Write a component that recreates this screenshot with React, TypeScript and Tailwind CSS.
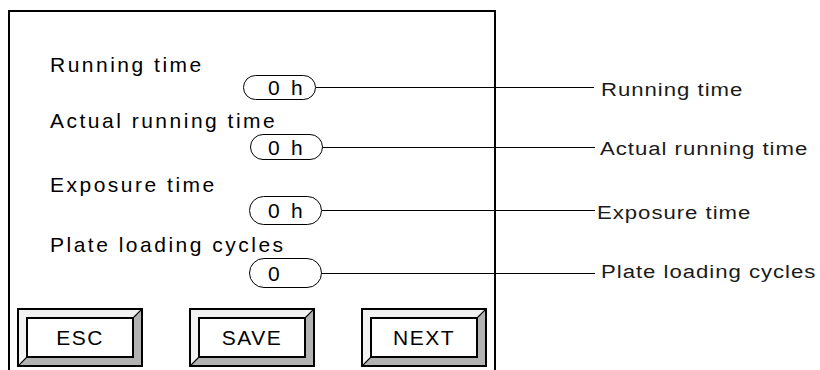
import React from "react";

const font = { fontFamily: '"Liberation Sans", Arial, sans-serif' };

function LeftLabel({ text, mt }: { text: string; mt: string }) {
  return (
    <div className={`${mt} pl-[40px] text-[21px] leading-[24px] tracking-[2.5px] text-black whitespace-nowrap`}>
      {text}
    </div>
  );
}

function Row({
  value,
  label,
  mt,
  pillMl,
  pillPl,
  pillH,
  lineW,
  labelMl,
  labelMt,
}: {
  value: string;
  label: string;
  mt: string;
  pillMl: string;
  pillPl: string;
  pillH: string;
  lineW: string;
  labelMl: string;
  labelMt: string;
}) {
  return (
    <div className={`${mt} flex items-center w-max`}>
      <div
        className={`${pillMl} ${pillPl} ${pillH} w-[73px] shrink-0 flex items-center rounded-full border border-black bg-white text-[21px] leading-none tracking-[2.8px] text-black`}
      >
        {value}
      </div>
      <div className={`${lineW} h-px bg-black shrink-0`} />
      <div
        className={`${labelMl} ${labelMt} origin-left scale-x-[1.23] text-[18px] leading-none tracking-[0.8px] text-[#1a1a1a] whitespace-nowrap`}
      >
        {label}
      </div>
    </div>
  );
}

function BevelButton({ text }: { text: string }) {
  return (
    <div className="relative w-[126px] h-[59px] border-2 border-black">
      <div className="w-full h-full border-[7px] border-t-[#f2f2f2] border-l-[#f2f2f2] border-r-[#b3b3b3] border-b-[#b3b3b3]">
        <div className="w-full h-full border-2 border-black bg-white flex items-center justify-center text-[21px] leading-none tracking-[1.5px] text-black">
          {text}
        </div>
      </div>
      <svg className="absolute inset-0 pointer-events-none" width="122" height="55" viewBox="0 0 122 55">
        <line x1="122" y1="0" x2="114" y2="8" stroke="#000" strokeWidth="1.2" />
        <line x1="0" y1="55" x2="8" y2="47" stroke="#000" strokeWidth="1.2" />
      </svg>
    </div>
  );
}

export default function App() {
  return (
    <div className="w-[820px] h-[370px] overflow-hidden bg-white" style={font}>
      <div className="ml-[8px] mt-[10px] w-[488px] h-[365px] border-2 border-black flex flex-col">
        <LeftLabel text="Running time" mt="mt-[41px]" />
        <Row
          value="0 h"
          label="Running time"
          mt="-mt-[2px]"
          pillMl="ml-[233px]"
          pillPl="pl-[24px]"
          pillH="h-[25px]"
          lineW="w-[278px]"
          labelMl="ml-[7px]"
          labelMt="mt-[4px]"
        />
        <LeftLabel text="Actual running time" mt="mt-[9px]" />
        <Row
          value="0 h"
          label="Actual running time"
          mt="mt-[1px]"
          pillMl="ml-[240px]"
          pillPl="pl-[17px]"
          pillH="h-[26px]"
          lineW="w-[272px]"
          labelMl="ml-[5px]"
          labelMt="mt-[3px]"
        />
        <LeftLabel text="Exposure time" mt="mt-[13px]" />
        <Row
          value="0 h"
          label="Exposure time"
          mt="-mt-[1px]"
          pillMl="ml-[239px]"
          pillPl="pl-[18px]"
          pillH="h-[29px]"
          lineW="w-[273px]"
          labelMl="ml-[2px]"
          labelMt="mt-[4px]"
        />
        <LeftLabel text="Plate loading cycles" mt="mt-[8px]" />
        <Row
          value="0"
          label="Plate loading cycles"
          mt="mt-[1px]"
          pillMl="ml-[239px]"
          pillPl="pl-[18px]"
          pillH="h-[30px]"
          lineW="w-[273px]"
          labelMl="ml-[6px]"
          labelMt="-mt-[3px]"
        />
        <div className="mt-[20px] px-[7px] flex justify-between">
          <BevelButton text="ESC" />
          <BevelButton text="SAVE" />
          <BevelButton text="NEXT" />
        </div>
      </div>
    </div>
  );
}
